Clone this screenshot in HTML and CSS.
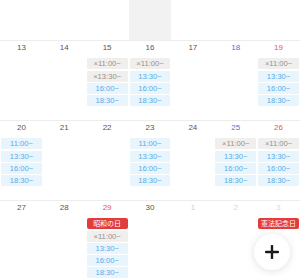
FILE: index.html
```html
<!DOCTYPE html>
<html lang="ja">
<head>
  <meta charset="UTF-8" />
  <meta name="viewport" content="width=device-width, initial-scale=1" />
  <title>予約カレンダー</title>
  <link rel="stylesheet" href="styles.css">
</head>
<body>
  <div class="calendar">
    <!-- 前の週（下端のみ） -->
    <div class="week week-tail">
      <div class="day"></div>
      <div class="day"></div>
      <div class="day"></div>
      <div class="day is-today"></div>
      <div class="day"></div>
      <div class="day"></div>
      <div class="day"></div>
    </div>

    <div class="week">
      <div class="day"><span class="date">13</span></div>
      <div class="day"><span class="date">14</span></div>
      <div class="day">
        <span class="date">15</span>
        <span class="slot full">×11:00~</span>
        <span class="slot full">×13:30~</span>
        <span class="slot">16:00~</span>
        <span class="slot">18:30~</span>
      </div>
      <div class="day">
        <span class="date">16</span>
        <span class="slot full">×11:00~</span>
        <span class="slot">13:30~</span>
        <span class="slot">16:00~</span>
        <span class="slot">18:30~</span>
      </div>
      <div class="day"><span class="date">17</span></div>
      <div class="day sat"><span class="date">18</span></div>
      <div class="day sun">
        <span class="date">19</span>
        <span class="slot full">×11:00~</span>
        <span class="slot">13:30~</span>
        <span class="slot">16:00~</span>
        <span class="slot">18:30~</span>
      </div>
    </div>

    <div class="week">
      <div class="day">
        <span class="date">20</span>
        <span class="slot">11:00~</span>
        <span class="slot">13:30~</span>
        <span class="slot">16:00~</span>
        <span class="slot">18:30~</span>
      </div>
      <div class="day"><span class="date">21</span></div>
      <div class="day"><span class="date">22</span></div>
      <div class="day">
        <span class="date">23</span>
        <span class="slot">11:00~</span>
        <span class="slot">13:30~</span>
        <span class="slot">16:00~</span>
        <span class="slot">18:30~</span>
      </div>
      <div class="day"><span class="date">24</span></div>
      <div class="day sat">
        <span class="date">25</span>
        <span class="slot full">×11:00~</span>
        <span class="slot">13:30~</span>
        <span class="slot">16:00~</span>
        <span class="slot">18:30~</span>
      </div>
      <div class="day sun">
        <span class="date">26</span>
        <span class="slot full">×11:00~</span>
        <span class="slot">13:30~</span>
        <span class="slot">16:00~</span>
        <span class="slot">18:30~</span>
      </div>
    </div>

    <div class="week">
      <div class="day"><span class="date">27</span></div>
      <div class="day"><span class="date">28</span></div>
      <div class="day sun">
        <span class="date">29</span>
        <span class="holiday">昭和の日</span>
        <span class="slot full">×11:00~</span>
        <span class="slot">13:30~</span>
        <span class="slot">16:00~</span>
        <span class="slot">18:30~</span>
      </div>
      <div class="day"><span class="date">30</span></div>
      <div class="day other"><span class="date">1</span></div>
      <div class="day sat other"><span class="date">2</span></div>
      <div class="day sun other">
        <span class="date">3</span>
        <span class="holiday">憲法記念日</span>
      </div>
    </div>
  </div>

  <button class="fab" aria-label="追加">
    <svg width="14" height="14" viewBox="0 0 14 14">
      <path d="M7 1v12M1 7h12" stroke="#1c1c1c" stroke-width="2.4" stroke-linecap="round"/>
    </svg>
  </button>
</body>
</html>
```

FILE: styles.css
```css
body {
  margin: 0;
  background-color: #ffffff;
  font-family: "Liberation Sans", "Noto Sans CJK JP", sans-serif;
  overflow: hidden;
}
.calendar {
  width: 300px;
}
.week {
  display: grid;
  grid-template-columns: repeat(7, 1fr);
  height: 80px;
  box-sizing: border-box;
  border-top: 1px solid #ededed;
}
.week-tail {
  height: 40px;
  border-top: none;
}
.day {
  display: flex;
  flex-direction: column;
  gap: 1.3px;
  padding: 0 1px;
  min-width: 0;
}
.day.is-today {
  background-color: #f2f2f2;
}
.date {
  display: block;
  text-align: center;
  font-size: 8px;
  line-height: 14px;
  padding-bottom: 2px;
  color: #555555;
}
.sat .date {
  color: #4a77d4;
}
.sun .date {
  color: #e4575b;
}
.other .date {
  opacity: 0.3;
}
.slot {
  display: block;
  height: 11px;
  line-height: 11px;
  font-size: 7.6px;
  text-align: center;
  border-radius: 1px;
  background-color: #e8f5fd;
  color: #55abe8;
  white-space: nowrap;
}
.slot.full {
  background-color: #f1efed;
  color: #948f8b;
}
.holiday {
  display: block;
  height: 11px;
  line-height: 11px;
  font-size: 7px;
  text-align: center;
  border-radius: 2px;
  background-color: #e23c3c;
  color: #ffffff;
  white-space: nowrap;
}
.fab {
  position: absolute;
  right: 10px;
  bottom: 8px;
  width: 36px;
  height: 36px;
  border: none;
  border-radius: 50%;
  background-color: #ffffff;
  box-shadow: 0 1px 8px rgba(0,0,0,0.12);
  display: flex;
  align-items: center;
  justify-content: center;
  padding: 0;
  cursor: pointer;
}
```
